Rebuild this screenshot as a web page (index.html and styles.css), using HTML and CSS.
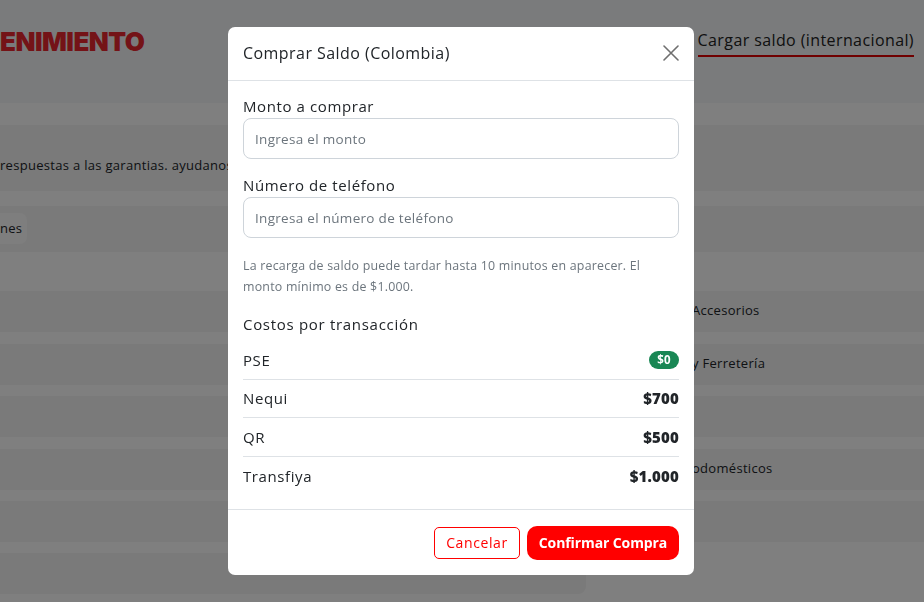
FILE: index.html
```html
<!DOCTYPE html>
<html lang="es">

<head>
    <meta charset="UTF-8">
    <meta name="viewport" content="width=device-width, initial-scale=1.0">
    <title>Comprar Saldo</title>
    <link rel="stylesheet" href="styles.css">
</head>

<body>
    <header class="topbar">
        <div class="logo">ENIMIENTO</div>
        <a class="topLink" href="#">Cargar saldo (internacional)</a>
    </header>

    <main class="content">
        <section class="notice">
            <p>respuestas a las garantias. ayudanos</p>
        </section>
        <div class="filters">
            <span class="chip">nes</span>
        </div>
        <ul class="categories">
            <li><span>Accesorios</span></li>
            <li><span>y Ferretería</span></li>
            <li><span></span></li>
            <li><span>odomésticos</span></li>
            <li><span></span></li>
        </ul>
        <div class="footCard"></div>
    </main>

    <div class="backdrop">
        <div class="modal">
            <div class="modalHeader">
                <h5 class="modalTitle">Comprar Saldo (Colombia)</h5>
                <button class="close" type="button">
                    <svg width="16" height="16" viewBox="0 0 16 16">
                        <path d="M1 1 L15 15 M15 1 L1 15" stroke="#6f6f6f" stroke-width="1.6" fill="none" stroke-linecap="round" />
                    </svg>
                </button>
            </div>
            <div class="modalBody">
                <label class="label">Monto a comprar</label>
                <input class="input" type="text" placeholder="Ingresa el monto">

                <label class="label spaced">Número de teléfono</label>
                <input class="input" type="text" placeholder="Ingresa el número de teléfono">

                <p class="help">La recarga de saldo puede tardar hasta 10 minutos en aparecer. El monto mínimo es de $1.000.</p>

                <h6 class="costTitle">Costos por transacción</h6>
                <ul class="costs">
                    <li><span>PSE</span><span class="badge">$0</span></li>
                    <li><span>Nequi</span><b>$700</b></li>
                    <li><span>QR</span><b>$500</b></li>
                    <li><span>Transfiya</span><b>$1.000</b></li>
                </ul>
            </div>
            <div class="modalFooter">
                <button class="btn btnOutline" type="button">Cancelar</button>
                <button class="btn btnRed" type="button">Confirmar Compra</button>
            </div>
        </div>
    </div>
</body>

</html>
```

FILE: styles.css
```css
* {
    padding: 0px;
    margin: 0px;
    box-sizing: border-box;
    list-style: none;
}

body {
    font-family: "Open Sans", "Noto Sans", sans-serif;
    color: #212529;
    background-color: #fff;
    overflow: hidden;
}

.topbar {
    height: 103px;
    background-color: #f4f6f8;
    display: flex;
    justify-content: space-between;
    align-items: flex-start;
    padding: 27px 10px 0px 0px;
}

.logo {
    font-family: "Inter", sans-serif;
    font-weight: 900;
    font-size: 26px;
    letter-spacing: -0.5px;
    color: #e8262e;
    line-height: 30px;
}

.topLink {
    font-size: 16px;
    letter-spacing: 0.4px;
    color: #222;
    text-decoration: none;
    line-height: 26px;
    padding-bottom: 2px;
    border-bottom: 2px solid #e00000;
}

.content {
    padding-top: 22px;
}

.notice {
    height: 66px;
    background-color: #f4f4f4;
    padding-top: 31px;
    font-size: 13px;
    letter-spacing: 0.3px;
    white-space: nowrap;
}

.filters {
    margin-top: 15px;
    height: 46px;
    background-color: #f4f4f4;
    padding-top: 7px;
}

.chip {
    display: inline-block;
    height: 31px;
    line-height: 31px;
    padding: 0px 5px 0px 0px;
    font-size: 13px;
    letter-spacing: 0.3px;
    border-radius: 0px 7px 7px 0px;
    background-color: #fcfcfc;
}

.categories {
    margin-top: 39px;
    display: flex;
    flex-direction: column;
    gap: 11.5px;
}

.categories li {
    height: 41px;
    background-color: #f4f4f4;
    display: flex;
    align-items: center;
    padding: 0px 0px 3px 692px;
    font-size: 13px;
    letter-spacing: 0.3px;
}

.footCard {
    margin-top: 11px;
    width: 586px;
    height: 41px;
    background-color: #f4f4f4;
    border-radius: 0px 0px 8px 0px;
}

/* modal */
.backdrop {
    position: fixed;
    left: 0px;
    top: 0px;
    width: 100%;
    height: 100%;
    background-color: rgba(0, 0, 0, 0.5);
    display: flex;
    justify-content: center;
    align-items: flex-start;
    padding: 27px 2px 0px 0px;
}

.modal {
    width: 466px;
    background-color: #fff;
    border-radius: 7px;
}

.modalHeader {
    height: 54px;
    border-bottom: 1px solid #dee2e6;
    display: flex;
    align-items: center;
    justify-content: space-between;
    padding: 0px 15px 1px;
}

.modalTitle {
    font-size: 16px;
    font-weight: 400;
    letter-spacing: 0.45px;
}

.close {
    border: none;
    background: none;
    width: 16px;
    height: 16px;
    display: flex;
    cursor: pointer;
}

.modalBody {
    padding: 15px 15px 14px;
}

.label {
    display: block;
    font-size: 15px;
    letter-spacing: 0.6px;
    line-height: 21px;
    margin-bottom: 1px;
}

.label.spaced {
    margin-top: 16px;
}

.input {
    display: block;
    width: 100%;
    height: 41px;
    border: 1px solid #ced4da;
    border-radius: 8px;
    padding: 0px 11px;
    font-family: inherit;
    font-size: 13.5px;
    letter-spacing: 0.3px;
    color: #212529;
}

.input::placeholder {
    color: #6c757d;
}

.help {
    margin-top: 17px;
    font-size: 12.4px;
    letter-spacing: 0.22px;
    line-height: 21px;
    color: #6c757d;
}

.costTitle {
    margin-top: 17px;
    font-size: 15px;
    font-weight: 400;
    letter-spacing: 0.7px;
    line-height: 21px;
}

.costs {
    margin-top: 6px;
}

.costs li {
    height: 38.5px;
    display: flex;
    align-items: center;
    justify-content: space-between;
    font-size: 15px;
    letter-spacing: 0.6px;
    border-bottom: 1px solid #dee2e6;
}

.costs li:last-child {
    border-bottom: none;
}

.costs b {
    font-weight: 800;
    letter-spacing: 0.2px;
}

.badge {
    background-color: #198754;
    color: #fff;
    font-size: 11.5px;
    font-weight: 700;
    letter-spacing: 0px;
    height: 18px;
    line-height: 18px;
    padding: 0px 8.5px;
    border-radius: 9px;
}

.modalFooter {
    height: 66px;
    border-top: 1px solid #dee2e6;
    display: flex;
    justify-content: flex-end;
    align-items: center;
    gap: 7px;
    padding: 0px 15px;
}

.btn {
    font-family: inherit;
    font-size: 14px;
    cursor: pointer;
}

.btnOutline {
    height: 32px;
    width: 86px;
    color: #ff0000;
    letter-spacing: 0.6px;
    background-color: #fff;
    border: 1px solid #ff0000;
    border-radius: 5px;
}

.btnRed {
    height: 34px;
    width: 152px;
    color: #fff;
    font-weight: 700;
    letter-spacing: -0.1px;
    background-color: #ff0000;
    border: none;
    border-radius: 10px;
}
```
